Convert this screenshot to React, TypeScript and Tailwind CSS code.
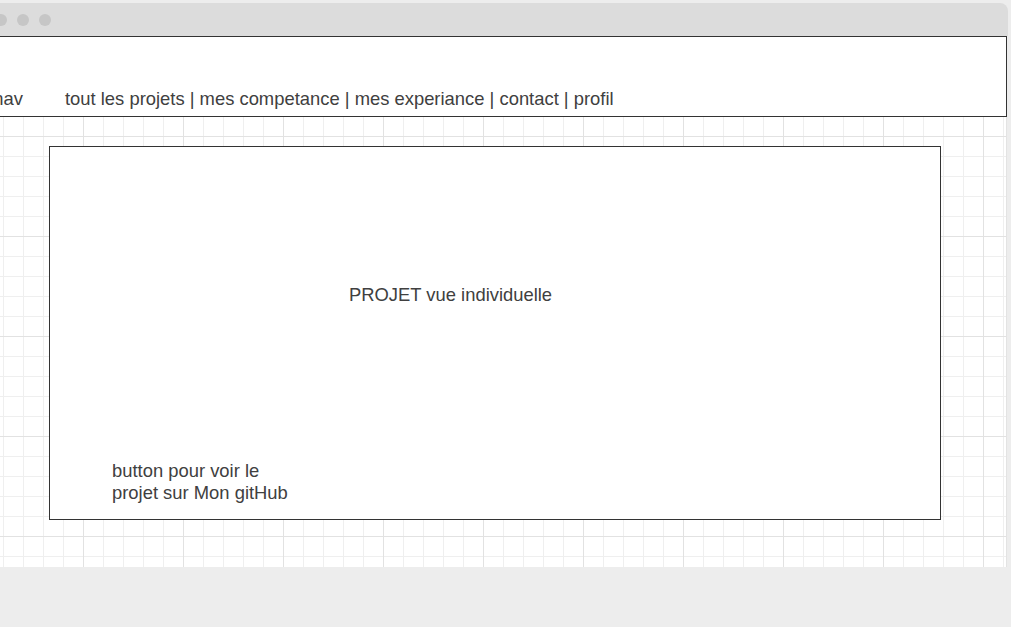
import React from "react";

const NAV_LINKS = ["tout les projets", "mes competance", "mes experiance", "contact", "profil"];

const App = () => {
  return (
    <div className="w-[1011px] h-[627px] overflow-hidden bg-[#ededed] font-['Liberation_Sans',Arial,sans-serif] text-[#404040]">
      <div className="mt-[3px] ml-[-20px] w-[1028px] h-[564px] flex flex-col">
        {/* window top bar */}
        <div className="h-[33px] bg-[#dcdcdc] rounded-tr-[8px] flex items-center gap-[10px] pl-[15px]">
          <span className="w-[12px] h-[12px] rounded-full bg-[#c6c6c6]" />
          <span className="w-[12px] h-[12px] rounded-full bg-[#c6c6c6]" />
          <span className="w-[12px] h-[12px] rounded-full bg-[#c6c6c6]" />
        </div>

        {/* nav */}
        <div className="h-[81px] w-[1027px] bg-white border border-[#333333] flex items-end pb-[7px] text-[18.4px] leading-[21px]">
          <span className="ml-[-1px] w-[85px] flex justify-end pr-[42px]">nav</span>
          <span>{NAV_LINKS.join(" | ")}</span>
        </div>

        {/* canvas with grid */}
        <div className="flex-1 w-[1027px] border-r border-[#e3e3e3] bg-white bg-[image:linear-gradient(to_right,#e2e2e2_1px,transparent_1px),linear-gradient(to_bottom,#e2e2e2_1px,transparent_1px),linear-gradient(to_right,#efefef_1px,transparent_1px),linear-gradient(to_bottom,#efefef_1px,transparent_1px)] bg-[size:100px_100px,100px_100px,20px_20px,20px_20px] bg-[position:103px_19px,103px_19px,3px_19px,3px_19px] pt-[29px] pl-[69px]">
          <div className="w-[892px] h-[374px] bg-white border border-[#333333] flex flex-col text-[18.4px] leading-[21px]">
            <div className="pt-[137px] pl-[299px]">PROJET vue individuelle</div>
            <div className="mt-auto pl-[62px] pb-[15px] leading-[22px]">
              <div>button pour voir le</div>
              <div>projet sur Mon gitHub</div>
            </div>
          </div>
        </div>
      </div>
    </div>
  );
};

export default App;
